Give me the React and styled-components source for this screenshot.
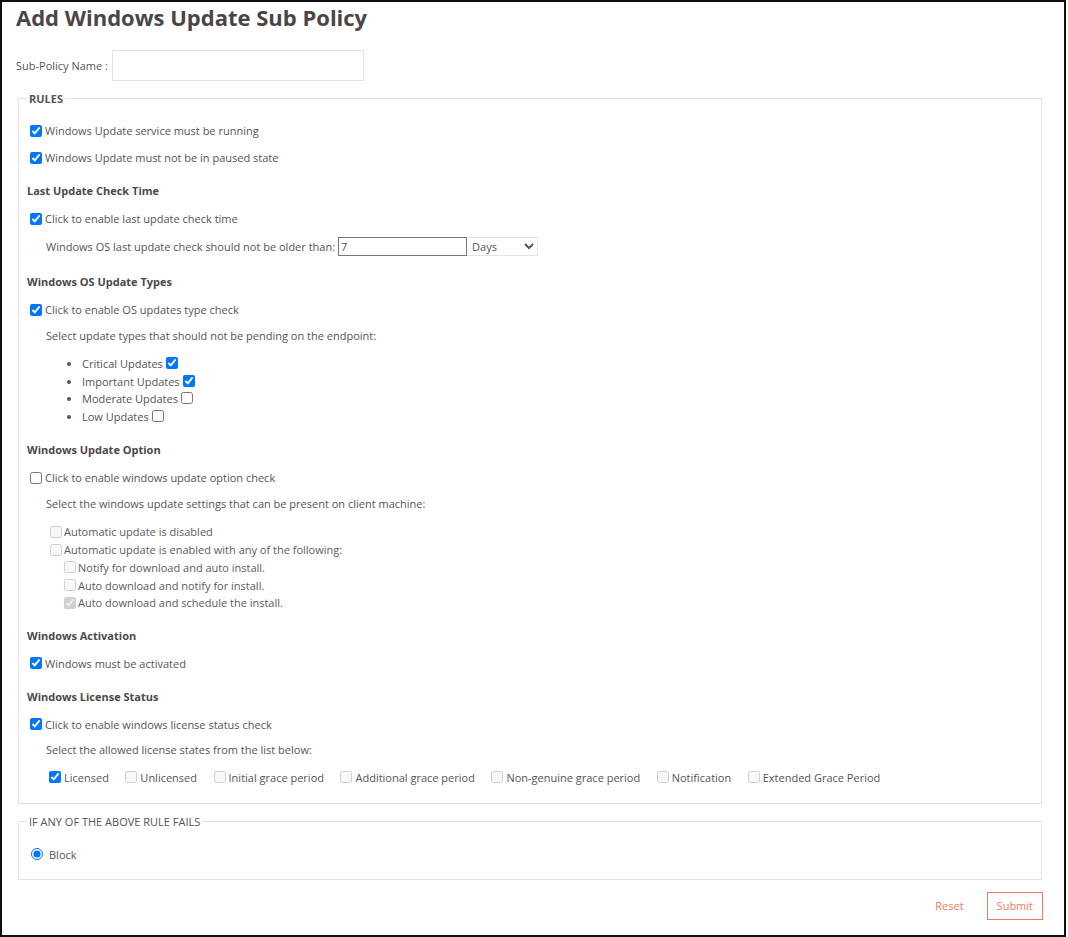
import React from "react";
import styled, { createGlobalStyle } from "styled-components";

const GlobalStyle = createGlobalStyle`
  html, body {
    margin: 0;
    padding: 0;
    background: #fff;
  }
  body {
    font-family: "Open Sans", "Liberation Sans", sans-serif;
    font-size: 11px;
    color: #555;
  }
  input[type="checkbox"], input[type="radio"] {
    width: 12px;
    height: 12px;
    margin: 0;
  }
`;

const Frame = styled.div`
  width: 1066px;
  height: 937px;
  box-sizing: border-box;
  border: 2px solid #120d10;
  padding: 0 22px 0 14px;
`;

const Title = styled.h1`
  margin: 0;
  font-size: 22px;
  font-weight: 700;
  line-height: 30px;
  color: #4b4646;
`;

const NameRow = styled.div`
  display: flex;
  align-items: center;
  gap: 4px;
  margin-top: 18px;
`;

const NameInput = styled.input`
  width: 252px;
  height: 31px;
  box-sizing: border-box;
  border: 1px solid #e3e3e3;
  outline: none;
`;

const Fieldset = styled.fieldset`
  margin: 10px 0 0 2px;
  padding: ${({ $pt }) => $pt}px 8px ${({ $pb }) => $pb}px 8px;
  border: 1px solid #e3e3e3;
  display: flex;
  flex-direction: column;
  min-width: 0;
`;

const Legend = styled.legend`
  padding: 0 2px;
  line-height: 15px;
  font-weight: ${({ $bold }) => ($bold ? 700 : 400)};
  color: #555;
`;

const Line = styled.div`
  display: flex;
  align-items: center;
  height: ${({ $h }) => $h || 17}px;
  margin-top: ${({ $gap }) => $gap || 0}px;
  padding-left: ${({ $indent }) => $indent || 0}px;
  white-space: nowrap;
`;

const Heading = styled(Line)`
  font-weight: 700;
  color: #4d4848;
`;

const Check = styled.input.attrs({ type: "checkbox" })`
  && {
    margin: 0 3px 0 3px;
  }
`;

const DaysInput = styled.input`
  width: 129px;
  height: 19px;
  box-sizing: border-box;
  margin-left: 3px;
  padding: 0 2px;
  border: 1px solid #767676;
  font: inherit;
  color: #555;
  outline: none;
`;

const DaysSelect = styled.select`
  width: 71px;
  height: 19px;
  box-sizing: border-box;
  border: 1px solid #e3e3e3;
  border-left: none;
  padding: 0 1px;
  font: inherit;
  color: #555;
  background: #fff;
  outline: none;
`;

const BulletList = styled.ul`
  margin: 11px 0 0 0;
  padding-left: 55px;
  list-style: disc;
`;

const Bullet = styled.li`
  line-height: 17.5px;
  height: 17.5px;

  input {
    margin: 0 0 0 3px;
    vertical-align: -1px;
  }
`;

const Options = styled.div`
  margin-top: 11px;
  display: flex;
  flex-direction: column;
`;

const OptRow = styled.label`
  display: flex;
  align-items: center;
  height: 17.75px;
  padding-left: ${({ $level }) => 20 + $level * 14}px;
  color: #5c5c5c;

  input {
    margin: 0 2px 0 3px;
  }
`;

const LicenseRow = styled(Line)`
  gap: 13.5px;
`;

const LicenseItem = styled.label`
  display: flex;
  align-items: center;
`;

const RadioRow = styled.label`
  display: flex;
  align-items: center;
  height: 17px;

  input {
    margin: 0 6px 0 4px;
  }
`;

const Footer = styled.div`
  display: flex;
  justify-content: flex-end;
  gap: 13px;
  margin: 12px -1px 0 0;
`;

const Button = styled.button`
  height: 28px;
  padding: 0 9px;
  background: #fff;
  border: 1px solid ${({ $outline }) => ($outline ? "#f27b5b" : "transparent")};
  color: #f27b5b;
  font: inherit;
  cursor: pointer;
`;

const updateTypes = [
  { label: "Critical Updates", checked: true },
  { label: "Important Updates", checked: true },
  { label: "Moderate Updates", checked: false },
  { label: "Low Updates", checked: false },
];

const updateOptions = [
  { label: "Automatic update is disabled", level: 0, checked: false },
  { label: "Automatic update is enabled with any of the following:", level: 0, checked: false },
  { label: "Notify for download and auto install.", level: 1, checked: false },
  { label: "Auto download and notify for install.", level: 1, checked: false },
  { label: "Auto download and schedule the install.", level: 1, checked: true },
];

const licenseStates = [
  { label: "Licensed", checked: true },
  { label: "Unlicensed" },
  { label: "Initial grace period" },
  { label: "Additional grace period" },
  { label: "Non-genuine grace period" },
  { label: "Notification" },
  { label: "Extended Grace Period" },
];

export default function App() {
  return (
    <>
      <GlobalStyle />
      <Frame>
        <Title>Add Windows Update Sub Policy</Title>

        <NameRow>
          <span>Sub-Policy Name :</span>
          <NameInput type="text" />
        </NameRow>

        <Fieldset $pt={16} $pb={17}>
          <Legend $bold>RULES</Legend>

          <Line>
            <Check defaultChecked />
            Windows Update service must be running
          </Line>
          <Line $gap={10}>
            <Check defaultChecked />
            Windows Update must not be in paused state
          </Line>

          <Heading $gap={16}>Last Update Check Time</Heading>
          <Line $gap={11}>
            <Check defaultChecked />
            Click to enable last update check time
          </Line>
          <Line $gap={10} $h={19} $indent={19}>
            Windows OS last update check should not be older than:
            <DaysInput type="text" defaultValue="7" />
            <DaysSelect defaultValue="days">
              <option value="days">Days</option>
              <option value="weeks">Weeks</option>
            </DaysSelect>
          </Line>

          <Heading $gap={17}>Windows OS Update Types</Heading>
          <Line $gap={11}>
            <Check defaultChecked />
            Click to enable OS updates type check
          </Line>
          <Line $gap={9} $indent={19}>
            Select update types that should not be pending on the endpoint:
          </Line>
          <BulletList>
            {updateTypes.map((t) => (
              <Bullet key={t.label}>
                {t.label}
                <input type="checkbox" defaultChecked={t.checked} />
              </Bullet>
            ))}
          </BulletList>

          <Heading $gap={16}>Windows Update Option</Heading>
          <Line $gap={11}>
            <Check />
            Click to enable windows update option check
          </Line>
          <Line $gap={9} $indent={19}>
            Select the windows update settings that can be present on client machine:
          </Line>
          <Options>
            {updateOptions.map((o) => (
              <OptRow key={o.label} $level={o.level}>
                <input type="checkbox" disabled defaultChecked={o.checked} />
                {o.label}
              </OptRow>
            ))}
          </Options>

          <Heading $gap={15}>Windows Activation</Heading>
          <Line $gap={11}>
            <Check defaultChecked />
            Windows must be activated
          </Line>

          <Heading $gap={16}>Windows License Status</Heading>
          <Line $gap={11}>
            <Check defaultChecked />
            Click to enable windows license status check
          </Line>
          <Line $gap={8} $indent={19}>
            Select the allowed license states from the list below:
          </Line>
          <LicenseRow $gap={11} $indent={19}>
            {licenseStates.map((s) => (
              <LicenseItem key={s.label}>
                <Check disabled={!s.checked} defaultChecked={s.checked} />
                {s.label}
              </LicenseItem>
            ))}
          </LicenseRow>
        </Fieldset>

        <Fieldset $pt={17} $pb={16}>
          <Legend>IF ANY OF THE ABOVE RULE FAILS</Legend>
          <RadioRow>
            <input type="radio" name="action" defaultChecked />
            Block
          </RadioRow>
        </Fieldset>

        <Footer>
          <Button type="button">Reset</Button>
          <Button type="button" $outline>
            Submit
          </Button>
        </Footer>
      </Frame>
    </>
  );
}
